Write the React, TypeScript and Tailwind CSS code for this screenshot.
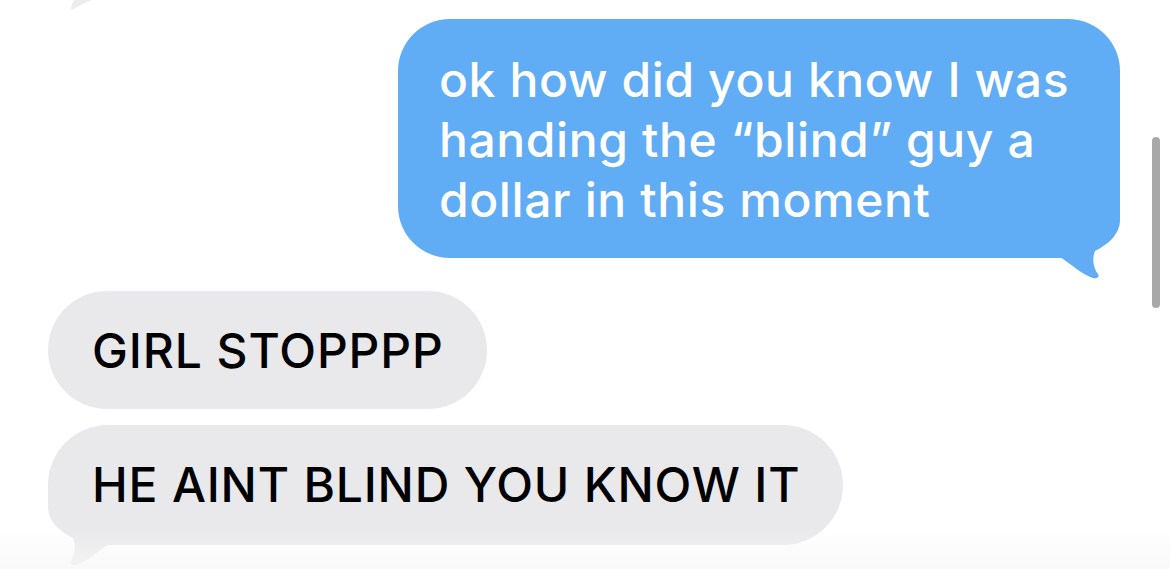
import React from 'react';

// ─── Bubble tails ───────────────────────────────────────────────────────────
function BlueTail() {
  return (
    <svg
      className="absolute right-[-5px] bottom-[-22px]"
      width="75"
      height="82"
      viewBox="0 0 75 82"
    >
      <path
        d="M0 0 L70 0 L70 22 C70 38 55 48 45 53 C42 60 43 70 48 76 C50 79 47 81 43 80 C33 77 22 67 10 59 L0 59 Z"
        fill="#60acf5"
      />
    </svg>
  );
}

function GrayTail() {
  return (
    <svg
      className="absolute left-[-5px] bottom-[-22px]"
      width="75"
      height="82"
      viewBox="0 0 75 82"
    >
      <path
        d="M75 0 L5 0 L5 22 C5 38 20 48 30 53 C33 60 32 70 28 76 C26 79 29 81 33 80 C43 77 54 67 66 59 L75 59 Z"
        fill="#e9e9eb"
      />
    </svg>
  );
}

const font = { fontFamily: 'Inter, "Noto Sans", sans-serif' };

export default function App() {
  return (
    <div
      className="relative h-[569px] w-[1170px] overflow-hidden bg-white"
      style={font}
    >
      {/* tail of the previous bubble, cut off at the top */}
      <svg className="absolute left-[68px] top-0" width="30" height="12" viewBox="0 0 30 12">
        <path d="M4 10 C10 6 16 3 24 0 L6 0 C4 4 2 8 4 10 Z" fill="#ececee" />
      </svg>

      <div className="flex flex-col pt-[19px]">
        {/* sent */}
        <div className="flex justify-end pr-[50px]">
          <div className="relative w-[722px] rounded-[52px] bg-[#60acf5] pl-[41px] pr-[30px] pt-[31px] pb-[28px] text-[48px] font-medium leading-[60px] tracking-[0.6px] text-white">
            <BlueTail />
            <span className="relative">
              ok how did you know I was
              <br />
              handing the “blind” guy a
              <br />
              dollar in this moment
            </span>
          </div>
        </div>

        {/* received */}
        <div className="mt-[33px] flex flex-col items-start gap-[16px] pl-[48px]">
          <div className="rounded-full bg-[#e9e9eb] pl-[44px] pr-[43px] pt-[30px] pb-[28px] text-[48px] font-medium leading-[60px] tracking-[0.9px] text-black">
            GIRL STOPPPP
          </div>
          <div className="relative rounded-full bg-[#e9e9eb] pl-[44px] pr-[43px] pt-[30px] pb-[30px] text-[48px] font-medium leading-[60px] tracking-[0.8px] text-black">
            <GrayTail />
            <span className="relative">HE AINT BLIND YOU KNOW IT</span>
          </div>
        </div>
      </div>

      {/* bottom fade */}
      <div className="absolute inset-x-0 bottom-0 h-[40px] bg-gradient-to-b from-white/0 to-[#f7f7f7]/80" />

      {/* scroll indicator */}
      <div className="absolute right-[10px] top-[137px] h-[171px] w-[8px] rounded-full bg-[#a8a8a8]" />
    </div>
  );
}
